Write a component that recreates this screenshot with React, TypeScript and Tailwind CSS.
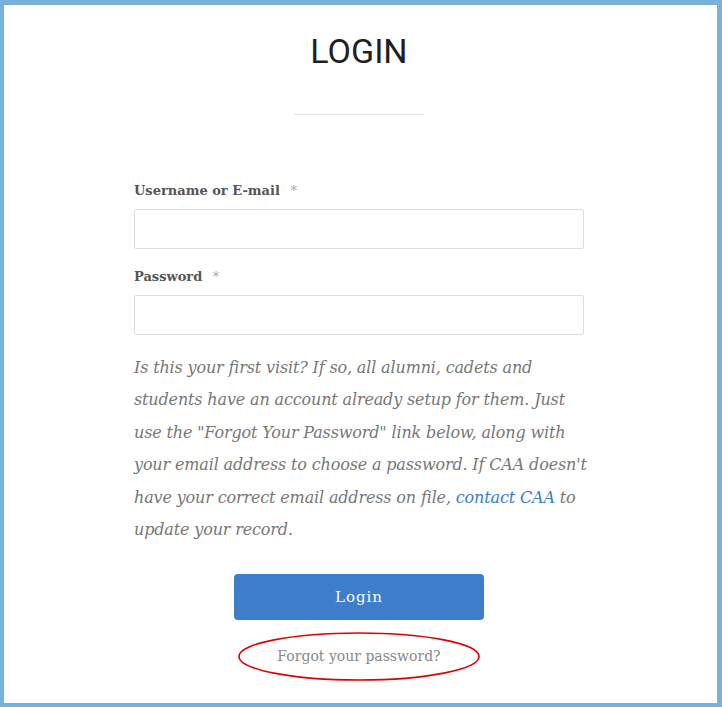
export default function App() {
  const slab = "font-['DejaVu_Serif','Liberation_Serif',serif]";
  return (
    <div className="w-[722px] h-[707px] bg-white border-[5px] border-l-4 border-b-4 border-[#7ab1d8] pr-[3px] flex flex-col items-center">
      <h1 className="mt-[24px] text-[34px] leading-[44px] text-[#1f1f1f] font-['Roboto',sans-serif] font-normal">
        LOGIN
      </h1>
      <div className="mt-[41px] w-[130px] h-px bg-[#e6e6e6]" />

      <form className={`mt-[66px] w-[450px] flex flex-col ${slab}`} onSubmit={(e) => e.preventDefault()}>
        <label className="text-[13px] leading-[20px] font-bold text-[#555]">
          Username or E-mail <span className="ml-1.5 font-normal text-[#aaa]">*</span>
        </label>
        <input className="mt-[8px] h-[40px] w-full border border-[#ddd] rounded-[2px] outline-none px-3" />

        <label className="mt-[18px] text-[13px] leading-[20px] font-bold text-[#555]">
          Password <span className="ml-1.5 font-normal text-[#aaa]">*</span>
        </label>
        <input type="password" className="mt-[8px] h-[40px] w-full border border-[#ddd] rounded-[2px] outline-none px-3" />

        <p className="mt-[17px] text-[16px] leading-[32.4px] italic text-[#777] whitespace-nowrap tracking-[-0.15px]">
          Is this your first visit? If so, all alumni, cadets and
          <br />
          students have an account already setup for them. Just
          <br />
          use the "Forgot Your Password" link below, along with
          <br />
          your email address to choose a password. If CAA doesn't
          <br />
          have your correct email address on file, <a href="#" className="text-[#3a7bd0]">contact CAA</a> to
          <br />
          update your record.
        </p>

        <button
          type="submit"
          className="mt-[28px] self-center w-[250px] h-[46px] rounded-[4px] bg-[#3d7eca] text-white text-[15px] tracking-[1px]"
        >
          Login
        </button>

        <div className="mt-[12px] self-center relative w-[242px] h-[49px] flex items-center justify-center">
          <svg className="absolute inset-0" width="242" height="49" viewBox="0 0 242 49">
            <ellipse cx="121" cy="24.5" rx="120" ry="23.5" fill="none" stroke="#e00000" strokeWidth="1.6" />
          </svg>
          <a href="#" className="relative text-[14px] text-[#888]">
            Forgot your password?
          </a>
        </div>
      </form>
    </div>
  );
}
